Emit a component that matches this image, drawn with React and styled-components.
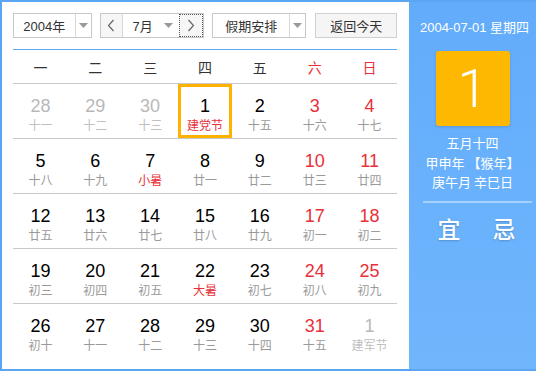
import React from 'react'
import styled, { createGlobalStyle } from 'styled-components'

const GlobalStyle = createGlobalStyle`
  html, body { margin: 0; padding: 0; background: #fff; }
  * { box-sizing: border-box; }
`

const weekNames = ['一', '二', '三', '四', '五', '六', '日']

const weeks = [
  [
    { d: 28, l: '十一', other: true },
    { d: 29, l: '十二', other: true },
    { d: 30, l: '十三', other: true },
    { d: 1, l: '建党节', fest: true, selected: true },
    { d: 2, l: '十五' },
    { d: 3, l: '十六' },
    { d: 4, l: '十七' },
  ],
  [
    { d: 5, l: '十八' },
    { d: 6, l: '十九' },
    { d: 7, l: '小暑', fest: true },
    { d: 8, l: '廿一' },
    { d: 9, l: '廿二' },
    { d: 10, l: '廿三' },
    { d: 11, l: '廿四' },
  ],
  [
    { d: 12, l: '廿五' },
    { d: 13, l: '廿六' },
    { d: 14, l: '廿七' },
    { d: 15, l: '廿八' },
    { d: 16, l: '廿九' },
    { d: 17, l: '初一' },
    { d: 18, l: '初二' },
  ],
  [
    { d: 19, l: '初三' },
    { d: 20, l: '初四' },
    { d: 21, l: '初五' },
    { d: 22, l: '大暑', fest: true },
    { d: 23, l: '初七' },
    { d: 24, l: '初八' },
    { d: 25, l: '初九' },
  ],
  [
    { d: 26, l: '初十' },
    { d: 27, l: '十一' },
    { d: 28, l: '十二' },
    { d: 29, l: '十三' },
    { d: 30, l: '十四' },
    { d: 31, l: '十五' },
    { d: 1, l: '建军节', other: true },
  ],
]

const Arrow = () => (
  <svg width="9" height="5" viewBox="0 0 9 5">
    <path d="M0 0 L9 0 L4.5 5 Z" fill="#999" />
  </svg>
)

const Chevron = ({ dir }) => (
  <svg width="8" height="13" viewBox="0 0 8 13">
    <path
      d={dir === 'left' ? 'M6.5 1 L1.5 6.5 L6.5 12' : 'M1.5 1 L6.5 6.5 L1.5 12'}
      fill="none"
      stroke="#666"
      strokeWidth="1.2"
    />
  </svg>
)

const App = () => {
  return (
    <>
      <GlobalStyle />
      <Widget>
        <Main>
          <Toolbar>
            <Select w={79}>
              <SelectText>2004年</SelectText>
              <SelectArrow><Arrow /></SelectArrow>
            </Select>
            <MonthGroup>
              <NavButton><Chevron dir="left" /></NavButton>
              <MonthSelect>
                <SelectText>7月</SelectText>
                <Arrow />
              </MonthSelect>
              <NavButton focused><Chevron dir="right" /></NavButton>
            </MonthGroup>
            <Select w={95}>
              <SelectText>假期安排</SelectText>
              <SelectArrow><Arrow /></SelectArrow>
            </Select>
            <TodayButton>返回今天</TodayButton>
          </Toolbar>
          <WeekHeader>
            {weekNames.map((w, i) => (
              <WeekName key={w} weekend={i >= 5}>{w}</WeekName>
            ))}
          </WeekHeader>
          {weeks.map((row, ri) => (
            <Row key={ri} last={ri === weeks.length - 1}>
              {row.map((c, ci) => (
                <Cell key={ci} selected={c.selected}>
                  <DayNum other={c.other} weekend={ci >= 5}>{c.d}</DayNum>
                  <Lunar other={c.other} fest={c.fest}>{c.l}</Lunar>
                </Cell>
              ))}
            </Row>
          ))}
        </Main>
        <Side>
          <SideDate>2004-07-01 星期四</SideDate>
          <BigDay>1</BigDay>
          <LunarInfo>
            <div>五月十四</div>
            <div>甲申年 【猴年】</div>
            <div>庚午月 辛巳日</div>
          </LunarInfo>
          <Divider />
          <YiJi>
            <span>宜</span>
            <span>忌</span>
          </YiJi>
        </Side>
      </Widget>
    </>
  )
}

const Widget = styled.div`
  width: 536px;
  height: 371px;
  border: 2px solid #5aa6f2;
  border-right: none;
  display: flex;
  font-family: "Liberation Sans", "Noto Sans CJK SC", sans-serif;
  background: #fff;
`

const Main = styled.div`
  width: 407px;
  padding: 11px 12px 0 11px;
  display: flex;
  flex-direction: column;
`

const Toolbar = styled.div`
  display: flex;
  height: 25px;
  gap: 8px;
`

const Select = styled.div`
  width: ${p => p.w}px;
  height: 25px;
  border: 1px solid #c8c8c8;
  display: flex;
  background: #fff;
`

const SelectText = styled.div`
  flex: 1;
  display: flex;
  align-items: center;
  justify-content: center;
  font-size: 13px;
  color: #333;
`

const SelectArrow = styled.div`
  width: 16px;
  border-left: 1px solid #d8d8d8;
  display: flex;
  align-items: center;
  justify-content: center;
`

const MonthGroup = styled.div`
  display: flex;
  width: 105px;
  height: 25px;
  border: 1px solid #c8c8c8;
`

const NavButton = styled.div`
  width: ${p => (p.focused ? 24 : 22)}px;
  background: #f6f6f6;
  display: flex;
  align-items: center;
  justify-content: center;
  ${p => (p.focused
    ? 'outline: 1px dotted #555; outline-offset: -1px;'
    : 'border-right: 1px solid #d8d8d8;')}
`

const MonthSelect = styled.div`
  flex: 1;
  display: flex;
  align-items: center;
  padding: 0 6px 0 4px;
  & > div { justify-content: flex-start; padding-left: 6px; }
`

const TodayButton = styled.div`
  margin-left: 1px;
  width: 82px;
  height: 25px;
  border: 1px solid #d0d0d0;
  background: #f5f5f5;
  display: flex;
  align-items: center;
  justify-content: center;
  font-size: 13px;
  color: #333;
`

const WeekHeader = styled.div`
  margin-top: 11px;
  display: grid;
  grid-template-columns: repeat(7, 1fr);
  height: 35px;
  border-top: 1px solid #5aa6f2;
  border-bottom: 1px solid #c8c8c8;
`

const WeekName = styled.div`
  display: flex;
  align-items: center;
  justify-content: center;
  font-size: 14px;
  color: ${p => (p.weekend ? '#e8303a' : '#333')};
  font-family: "Noto Sans CJK SC", sans-serif;
`

const Row = styled.div`
  display: grid;
  grid-template-columns: repeat(7, 1fr);
  height: 55px;
  border-bottom: ${p => (p.last ? 'none' : '1px solid #c8c8c8')};
`

const Cell = styled.div`
  display: flex;
  flex-direction: column;
  align-items: center;
  padding-top: 9px;
  border: 3px solid ${p => (p.selected ? '#ffb300' : 'transparent')};
`

const DayNum = styled.div`
  font-size: 18px;
  line-height: 20px;
  color: ${p => (p.other ? '#b8b8b8' : p.weekend ? '#e8303a' : '#000')};
`

const Lunar = styled.div`
  margin-top: 1px;
  font-size: 12px;
  line-height: 16px;
  font-family: "Noto Sans CJK SC", sans-serif;
  color: ${p => (p.fest && !p.other ? '#e8303a' : p.other ? '#c0c0c0' : '#9a9a9a')};
`

const Side = styled.div`
  flex: 1;
  background: linear-gradient(#62acfb, #70b6fd);
  display: flex;
  flex-direction: column;
  align-items: center;
  color: #fff;
  padding-top: 18px;
`

const SideDate = styled.div`
  font-size: 13px;
  line-height: 16px;
  margin-left: 4px;
`

const BigDay = styled.div`
  margin-top: 15px;
  width: 74px;
  height: 75px;
  background: #ffb800;
  border-radius: 3px;
  box-shadow: 0 1px 3px rgba(0, 0, 0, 0.15);
  display: flex;
  align-items: center;
  justify-content: center;
  font-family: Roboto, "Liberation Sans", sans-serif;
  font-weight: 300;
  font-size: 54px;
  line-height: 1;
`

const LunarInfo = styled.div`
  margin-top: 7px;
  text-align: center;
  font-size: 13px;
  line-height: 19.5px;
  font-family: "Noto Sans CJK SC", sans-serif;
`

const Divider = styled.div`
  margin-top: 9px;
  width: 109px;
  margin-left: 10px;
  height: 2px;
  background: #a6d1fd;
`

const YiJi = styled.div`
  margin-top: 10px;
  width: 100%;
  display: flex;
  justify-content: center;
  gap: 32px;
  padding-left: 8px;
  font-size: 23px;
  line-height: 30px;
  font-weight: 500;
  font-family: "Noto Sans CJK SC", sans-serif;
  text-shadow: 0 1px 2px rgba(0, 0, 0, 0.2);
`

export default App
